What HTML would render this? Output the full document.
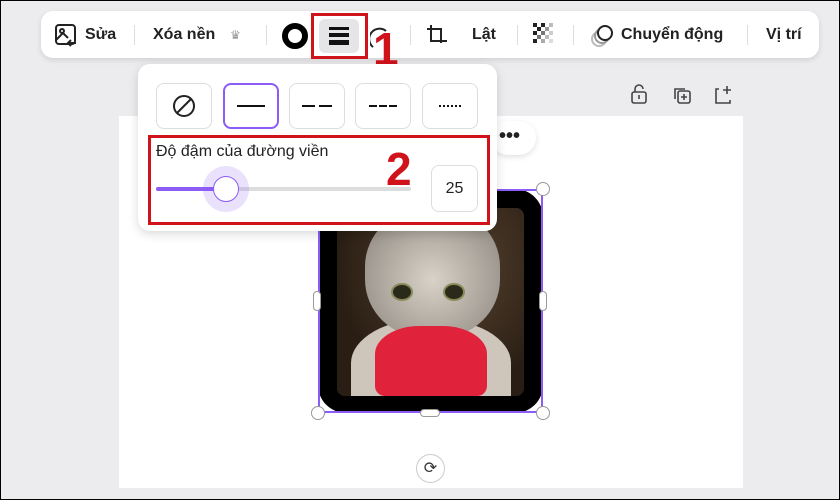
<!DOCTYPE html>
<html><head><meta charset="utf-8"><style>
*{box-sizing:border-box;margin:0;padding:0}
body{width:840px;height:500px;overflow:hidden;background:#ececee;font-family:"Liberation Sans","DejaVu Sans",sans-serif;position:relative;border:1px solid #000}
.abs{position:absolute}
.tb{left:40px;top:10px;width:778px;height:47px;background:#fff;border-radius:12px;box-shadow:0 2px 6px rgba(0,0,0,.12)}
.t{position:absolute;top:25px;font-size:16px;font-weight:bold;color:#222}
.sep{position:absolute;top:24px;width:1px;height:20px;background:#ddd}
.page{left:118px;top:115px;width:624px;height:372px;background:#fff}
.pop{left:137px;top:63px;width:359px;height:167px;background:#fff;border-radius:12px;box-shadow:0 3px 10px rgba(0,0,0,.15)}
.btn{position:absolute;top:82px;width:56px;height:46px;border:1px solid #ddd;border-radius:8px;background:#fff}
.red{border:3px solid #d0121b}
.h{position:absolute;width:14px;height:14px;border-radius:50%;background:#fff;border:1px solid #999}
</style></head><body>
<div class="abs tb"></div>
<svg class="abs" style="left:53px;top:22px" width="24" height="24" viewBox="0 0 24 24" fill="none" stroke="#222" stroke-width="2"><rect x="2" y="2" width="19" height="19" rx="3"/><circle cx="8" cy="8" r="2"/><path d="M2 17l7-7 5 5M14 20h8M17 17l-3 3 3 3"/></svg>
<div class="t" style="left:84px">Sửa</div>
<div class="sep" style="left:133px"></div>
<div class="t" style="left:152px">Xóa nền</div>
<div class="t" style="left:229px;font-size:12px;color:#999;top:27px">♛</div>
<div class="sep" style="left:265px"></div>
<div class="abs" style="left:281px;top:22px;width:26px;height:26px;border-radius:50%;border:6px solid #000"></div>
<div class="abs" style="left:318px;top:18px;width:40px;height:34px;background:#e5e5e8;border-radius:6px"></div>
<div class="abs" style="left:328px;top:26px;width:20px;height:3px;background:#111"></div>
<div class="abs" style="left:328px;top:32px;width:20px;height:4px;background:#111"></div>
<div class="abs" style="left:328px;top:39px;width:20px;height:5px;background:#111"></div>
<div class="abs red" style="left:310px;top:12px;width:57px;height:46px"></div>
<svg class="abs" style="left:369px;top:24px" width="20" height="24"><path d="M3 22 A10 10 0 0 1 16 6" fill="none" stroke="#222" stroke-width="2"/></svg>
<div class="abs" style="left:372px;top:25px;font-size:46px;font-weight:bold;color:#d0121b;line-height:46px">1</div>
<div class="sep" style="left:409px"></div>
<svg class="abs" style="left:424px;top:22px" width="24" height="24" fill="none" stroke="#222" stroke-width="2"><path d="M6 2v16h16M2 6h14v14"/></svg>
<div class="t" style="left:471px">Lật</div>
<div class="sep" style="left:516px"></div>
<svg class="abs" style="left:532px;top:22px" width="24" height="24"><g fill="#222"><rect x="0" y="0" width="4" height="4"/><rect x="8" y="0" width="4" height="4"/><rect x="4" y="4" width="4" height="4"/><rect x="0" y="8" width="4" height="4"/><rect x="8" y="8" width="4" height="4" fill="#777"/><rect x="4" y="12" width="4" height="4" fill="#777"/><rect x="0" y="16" width="4" height="4"/><rect x="12" y="4" width="4" height="4" fill="#999"/><rect x="16" y="0" width="4" height="4" fill="#bbb"/><rect x="12" y="12" width="4" height="4" fill="#bbb"/><rect x="16" y="8" width="4" height="4" fill="#ccc"/><rect x="16" y="16" width="4" height="4" fill="#ddd"/><rect x="8" y="16" width="4" height="4" fill="#aaa"/></g></svg>
<div class="sep" style="left:572px"></div>
<svg class="abs" style="left:589px;top:22px" width="26" height="26" fill="none" stroke-width="2"><circle cx="9" cy="16" r="7" stroke="#bbb"/><circle cx="12" cy="13" r="7" stroke="#999"/><circle cx="15" cy="10" r="7" stroke="#222" fill="#fff"/></svg>
<div class="t" style="left:620px">Chuyển động</div>
<div class="sep" style="left:746px"></div>
<div class="t" style="left:765px">Vị trí</div>

<div class="abs page"></div>
<svg class="abs" style="left:628px;top:82px" width="110" height="24" fill="none" stroke="#444" stroke-width="1.6"><rect x="3" y="9" width="14" height="11" rx="2"/><path d="M6 9V6a4 4 0 0 1 8 0M10 12v4"/><rect x="49" y="8" width="12" height="12" rx="2"/><path d="M46 16V6h10M55 11v6M52 14h6"/><path d="M90 6h-3v14h14v-3M98 3v8M94 7h8"/></svg>
<div class="abs" style="left:490px;top:120px;width:45px;height:34px;background:#fff;border-radius:17px;box-shadow:0 2px 6px rgba(0,0,0,.12)"></div>
<div class="abs" style="left:498px;top:124px;font-size:20px;font-weight:bold;color:#222">•••</div>

<div class="abs" style="left:317px;top:188px;width:225px;height:224px;background:#000;border-radius:28px"></div>
<div class="abs" style="left:336px;top:207px;width:187px;height:188px;border-radius:8px;overflow:hidden;background:#3a2a1c">
 <div class="abs" style="left:0;top:0;width:187px;height:188px;background:radial-gradient(ellipse at 60% 30%,#5a4632,#2a1e14 70%)"></div>
 <div class="abs" style="left:14px;top:110px;width:160px;height:90px;border-radius:50% 50% 0 0;background:#cfc6bb"></div>
 <div class="abs" style="left:28px;top:0px;width:135px;height:130px;border-radius:45%;background:radial-gradient(circle at 50% 55%,#d8d2c8,#9a948c 75%)"></div>
 <div class="abs" style="left:38px;top:118px;width:112px;height:70px;border-radius:40% 40% 10px 10px;background:#e0223a"></div>
 <div class="abs" style="left:54px;top:75px;width:22px;height:18px;border-radius:50%;background:#2a2a1a;border:2px solid #8a8a5a"></div>
 <div class="abs" style="left:106px;top:75px;width:22px;height:18px;border-radius:50%;background:#2a2a1a;border:2px solid #8a8a5a"></div>
</div>
<div class="abs" style="left:317px;top:188px;width:225px;height:224px;border:2px solid #8b5cf6"></div>
<div class="h" style="left:310px;top:405px"></div><div class="h" style="left:535px;top:405px"></div><div class="h" style="left:535px;top:181px"></div>
<div class="abs" style="left:312px;top:290px;width:8px;height:20px;background:#fff;border:1px solid #999;border-radius:4px"></div>
<div class="abs" style="left:538px;top:290px;width:8px;height:20px;background:#fff;border:1px solid #999;border-radius:4px"></div>
<div class="abs" style="left:419px;top:408px;width:20px;height:8px;background:#fff;border:1px solid #999;border-radius:4px"></div>
<div class="abs" style="left:415px;top:453px;width:29px;height:29px;border-radius:50%;background:#fff;border:1px solid #ccc;text-align:center;font-size:16px;line-height:27px;color:#333">⟳</div>

<div class="abs pop"></div>
<div class="btn" style="left:155px"></div>
<svg class="abs" style="left:171px;top:93px" width="24" height="24" fill="none" stroke="#222" stroke-width="2"><circle cx="12" cy="12" r="10"/><path d="M5 19L19 5"/></svg>
<div class="btn" style="left:222px;border:2px solid #8b5cf6"></div>
<div class="abs" style="left:236px;top:104px;width:28px;height:2px;background:#111"></div>
<div class="btn" style="left:288px"></div>
<div class="abs" style="left:301px;top:104px;width:30px;height:2px;background:repeating-linear-gradient(90deg,#111 0 13px,transparent 13px 17px)"></div>
<div class="btn" style="left:354px"></div>
<div class="abs" style="left:368px;top:104px;width:28px;height:2px;background:repeating-linear-gradient(90deg,#111 0 8px,transparent 8px 10px)"></div>
<div class="btn" style="left:421px"></div>
<div class="abs" style="left:438px;top:104px;width:23px;height:2px;background:repeating-linear-gradient(90deg,#111 0 2px,transparent 2px 4px)"></div>
<div class="abs red" style="left:147px;top:134px;width:342px;height:90px"></div>
<div class="abs" style="left:155px;top:142px;font-size:16px;color:#222">Độ đậm của đường viền</div>
<div class="abs" style="left:385px;top:145px;font-size:46px;font-weight:bold;color:#d0121b;line-height:46px">2</div>
<div class="abs" style="left:155px;top:186px;width:255px;height:4px;background:#ddd;border-radius:2px"></div>
<div class="abs" style="left:155px;top:186px;width:70px;height:4px;background:#8b5cf6;border-radius:2px"></div>
<div class="abs" style="left:202px;top:165px;width:46px;height:46px;border-radius:50%;background:rgba(139,92,246,.18)"></div>
<div class="abs" style="left:212px;top:175px;width:26px;height:26px;border-radius:50%;background:#fff;border:1px solid #8b5cf6"></div>
<div class="abs" style="left:430px;top:164px;width:47px;height:47px;border:1px solid #ddd;border-radius:8px;text-align:center;line-height:45px;font-size:16px;color:#222">25</div>
</body></html>
